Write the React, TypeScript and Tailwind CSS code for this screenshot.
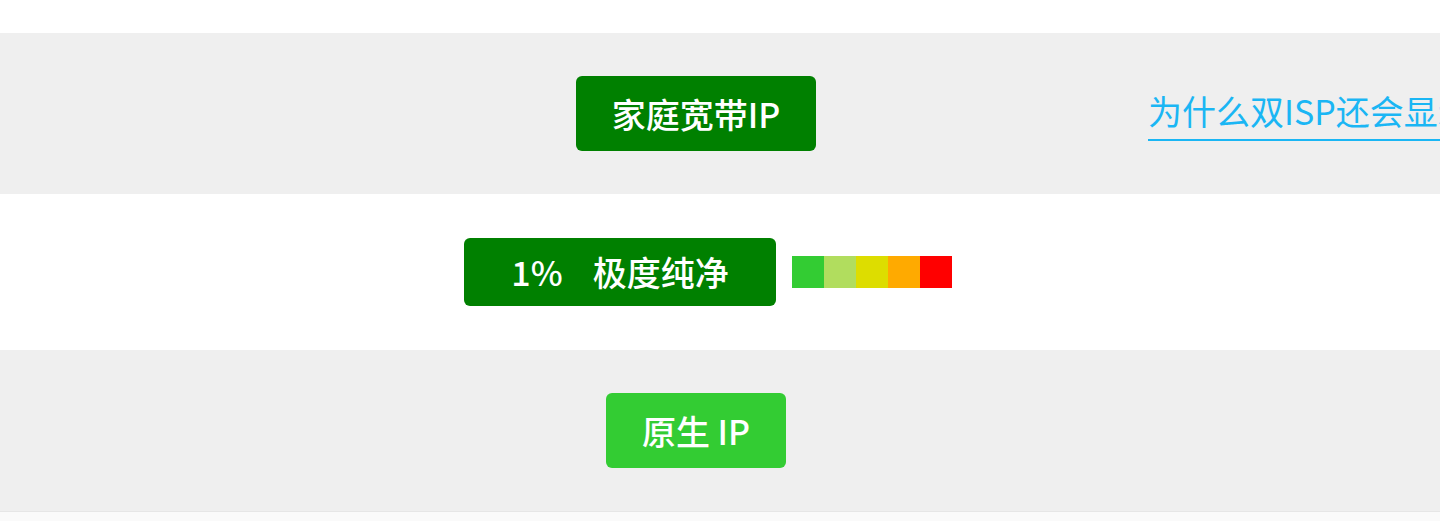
const font = { fontFamily: '"Noto Sans CJK SC", "Noto Sans", sans-serif' };

const purity = ['bg-[#33cc33]', 'bg-[#b1dd5e]', 'bg-[#dddd00]', 'bg-[#ffaa00]', 'bg-[#ff0000]'];

export default function App() {
  return (
    <div className="w-[1440px] h-[521px] overflow-hidden bg-white text-white" style={font}>
      <div className="h-[33px]" />

      <div className="flex h-[161px] bg-[#efefef]">
        <div className="w-[1136px] shrink-0 pl-[256px] flex items-center justify-center">
          <span className="rounded-[6px] bg-[#008000] px-[36px] h-[75px] flex items-center text-[34px] font-medium leading-none">
            家庭宽带IP
          </span>
        </div>
        <div className="shrink-0 pl-[12px] flex items-center whitespace-nowrap">
          <a className="text-[#1ab6f4] text-[34px] leading-[40px] pb-[8px] border-b-2 border-[#1ab6f4] mt-[4px]">
            为什么双ISP还会显示家庭宽带IP？
          </a>
        </div>
      </div>

      <div className="flex h-[156px] bg-white">
        <div className="w-[1136px] shrink-0 pl-[256px] flex items-center justify-center">
          <div className="flex items-center gap-[16px] ml-[24px]">
            <span className="rounded-[6px] bg-[#008000] w-[312px] h-[68px] flex items-center justify-center text-[34px] font-medium leading-none">
              <span>1%</span>
              <span className="ml-[30px]">极度纯净</span>
            </span>
            <div className="flex h-[32px]">
              {purity.map((c) => (
                <div key={c} className={`w-[32px] h-full ${c}`} />
              ))}
            </div>
          </div>
        </div>
      </div>

      <div className="flex h-[161px] bg-[#efefef]">
        <div className="w-[1136px] shrink-0 pl-[256px] flex items-center justify-center">
          <span className="rounded-[6px] bg-[#33cc33] px-[36px] h-[75px] flex items-center text-[34px] font-medium leading-none">
            原生 IP
          </span>
        </div>
      </div>

      <div className="h-px bg-[#e6e6e6]" />
      <div className="h-[9px] bg-[#fafafa]" />
    </div>
  );
}
